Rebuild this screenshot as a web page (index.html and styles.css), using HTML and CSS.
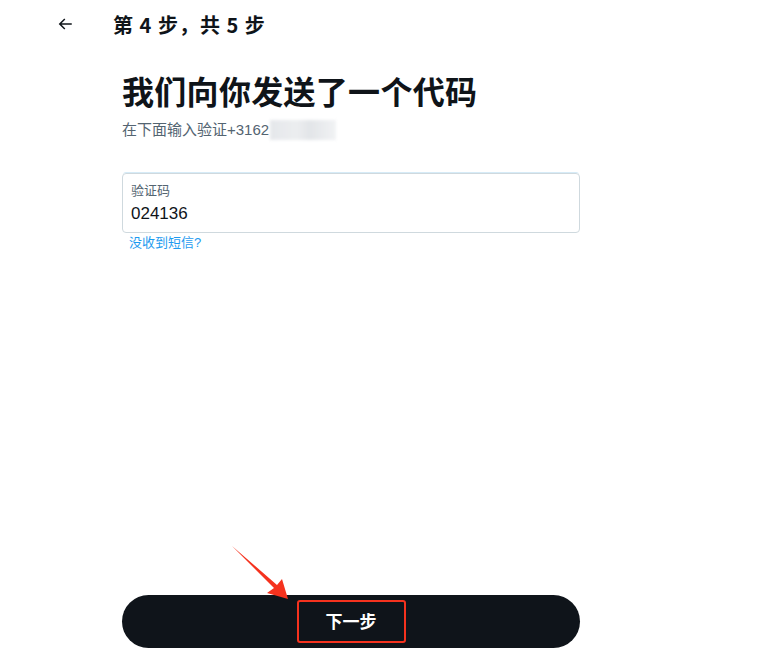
FILE: index.html
```html
<!DOCTYPE html>
<html lang="zh-CN">
<head>
    <meta charset="UTF-8">
    <meta name="viewport" content="width=device-width, initial-scale=1.0">
    <title>验证码</title>
    <link rel="stylesheet" href="styles.css">
</head>
<body>
    <div class="page">
        <div class="topbar">
            <button class="back" aria-label="返回">
                <svg width="18" height="18" viewBox="0 0 24 24"><path d="M7.414 13l5.043 5.04-1.414 1.42L3.586 12l7.457-7.46 1.414 1.42L7.414 11H21v2H7.414z" fill="#0f1419"/></svg>
            </button>
            <h1 class="step">第 4 步，共 5 步</h1>
        </div>

        <div class="content">
            <h2 class="title">我们向你发送了一个代码</h2>
            <p class="subtitle">在下面输入验证+3162<span class="blur"></span></p>

            <label class="field">
                <span class="field-label">验证码</span>
                <span class="field-value">024136</span>
            </label>
            <a class="resend" href="#">没收到短信?</a>
        </div>

        <div class="footer">
            <button class="next"><span class="next-text">下一步</span></button>
        </div>

        <!-- annotation arrow pointing at the button -->
        <svg class="pointer" width="80" height="70" viewBox="0 0 80 70">
            <path d="M12 11 L54 53 L47 58 L68 64 L62 44 L57 50 Z" fill="#f5321e"/>
        </svg>
    </div>
</body>
</html>
```

FILE: styles.css
```css
body {
    margin: 0;
    background-color: #ffffff;
    font-family: "Liberation Sans", "Noto Sans CJK SC", sans-serif;
    color: #0f1419;
}
.page {
    position: relative;
    width: 773px;
    height: 671px;
    display: flex;
    flex-direction: column;
}
.topbar {
    display: flex;
    align-items: center;
    height: 48px;
    padding-left: 55px;
}
.back {
    width: 20px;
    height: 20px;
    padding: 0;
    border: none;
    background: none;
    display: flex;
    align-items: center;
    justify-content: center;
    margin-right: 38px;
}
.step {
    margin: 0;
    font-size: 20px;
    font-weight: bold;
    font-family: "Noto Sans CJK SC", sans-serif;
    letter-spacing: 1px;
}
.content {
    width: 458px;
    margin-left: 122px;
    display: flex;
    flex-direction: column;
}
.title {
    margin: 20px 0 0;
    font-size: 32px;
    line-height: 44px;
    font-weight: bold;
    font-family: "Noto Sans CJK SC", sans-serif;
    letter-spacing: 0.3px;
}
.subtitle {
    margin: 7px 0 0;
    font-size: 15px;
    line-height: 22px;
    color: #536471;
    display: flex;
    align-items: center;
}
.blur {
    display: inline-block;
    width: 66px;
    height: 20px;
    margin-left: 1px;
    background: linear-gradient(90deg, #dfe2e6, #e8eaed 40%, #dcdfe3 60%, #eef0f2);
    filter: blur(1.5px);
    opacity: 0.8;
}
.field {
    margin-top: 32px;
    height: 60px;
    box-sizing: border-box;
    border: 1px solid #cfd9de;
    border-radius: 4px;
    box-shadow: 0 -2px 0 -1px #d6ebf7;
    padding: 8px 8px 0;
    display: flex;
    flex-direction: column;
}
.field-label {
    font-size: 13px;
    line-height: 18px;
    color: #536471;
}
.field-value {
    margin-top: 3px;
    font-size: 17px;
    line-height: 22px;
    color: #0f1419;
}
.resend {
    margin: 1px 0 0 7px;
    font-size: 13px;
    line-height: 18px;
    color: #1d9bf0;
    text-decoration: none;
}
.footer {
    margin-top: auto;
    margin-bottom: 23px;
    padding-left: 122px;
}
.next {
    width: 458px;
    height: 53px;
    border: none;
    border-radius: 27px;
    background-color: #0f141a;
    display: flex;
    align-items: center;
    justify-content: center;
    padding: 0;
}
.next-text {
    border: 2px solid #f5321e;
    border-radius: 3px;
    padding: 9px 27px 10px;
    color: #ffffff;
    font-size: 17px;
    line-height: 20px;
    font-weight: bold;
    font-family: "Noto Sans CJK SC", sans-serif;
}
.pointer {
    position: absolute;
    left: 220px;
    top: 535px;
}
```
